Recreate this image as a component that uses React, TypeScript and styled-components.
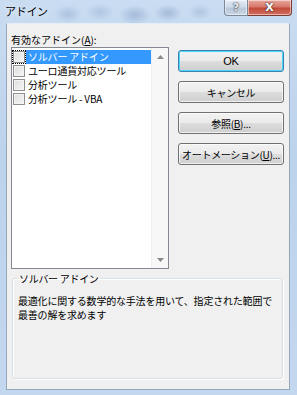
import React from 'react'
import styled, { createGlobalStyle } from 'styled-components'

const GlobalStyle = createGlobalStyle`
  html, body { margin: 0; padding: 0; }
  body {
    font-family: "Noto Sans CJK JP", "Noto Sans", sans-serif;
    font-size: 10px;
    color: #000;
  }
`

const Frame = styled.div`
  width: 297px;
  height: 395px;
  box-sizing: border-box;
  display: flex;
  flex-direction: column;
  background:
    radial-gradient(ellipse 14px 9px at 68px 14px, rgba(120,150,190,0.35), transparent),
    radial-gradient(ellipse 14px 9px at 100px 12px, rgba(120,150,190,0.3), transparent),
    radial-gradient(ellipse 16px 10px at 135px 15px, rgba(110,140,185,0.4), transparent),
    radial-gradient(ellipse 14px 9px at 168px 13px, rgba(110,140,185,0.4), transparent),
    radial-gradient(ellipse 12px 8px at 200px 12px, rgba(120,150,190,0.3), transparent),
    linear-gradient(180deg, #c9dcf1 0%, #bcd3ec 40%, #c3d8ef 100%);
`

const TitleBar = styled.div`
  height: 23px;
  display: flex;
  align-items: flex-start;
  justify-content: space-between;
  padding: 0 5px 0 5px;
`

const Title = styled.div`
  font-size: 11px;
  line-height: 14px;
  letter-spacing: -0.3px;
  margin-top: 4px;
  text-shadow: 0 0 6px rgba(255,255,255,0.9);
`

const Caption = styled.div`
  display: flex;
`

const CaptionButton = styled.div<{ $close?: boolean }>`
  width: ${({ $close }) => ($close ? '44px' : '24px')};
  height: 16px;
  box-sizing: border-box;
  display: flex;
  align-items: center;
  justify-content: center;
  border: 1px solid ${({ $close }) => ($close ? '#7d3a32' : '#7a8797')};
  border-top: none;
  border-left-width: ${({ $close }) => ($close ? '0' : '1px')};
  border-radius: ${({ $close }) => ($close ? '0 0 4px 0' : '0 0 0 4px')};
  background: ${({ $close }) =>
    $close
      ? 'linear-gradient(180deg, #e8a89e 0%, #d7786b 45%, #c24a3a 55%, #d0705f 100%)'
      : 'linear-gradient(180deg, #e4ecf5 0%, #cfdbe9 45%, #b9c8da 55%, #c9d6e5 100%)'};
  box-shadow: inset 0 0 0 1px rgba(255,255,255,0.5);
  color: ${({ $close }) => ($close ? '#fff' : '#e8eef5')};
  font-family: "DejaVu Sans", sans-serif;
  font-weight: bold;
  font-size: 11px;
  text-shadow: 0 0 1px #333, 0 0 2px #333;
`

const Client = styled.div`
  flex: 1;
  margin: 0 7px 5px 6px;
  border: 1px solid #97a6ba;
  border-top-color: #e6eef7;
  background: #f0f0f0;
  padding: 9px 5px 0 4px;
  display: flex;
  flex-direction: column;
`

const Label = styled.div`
  line-height: 13px;
  height: 13px;
  margin-bottom: 1px;
`

const Key = styled.span`
  text-decoration: underline;
`

const Upper = styled.div`
  display: flex;
  gap: 9px;
`

const ListBox = styled.div`
  width: 158px;
  height: 222px;
  box-sizing: border-box;
  border: 1px solid #828790;
  background: #fff;
  display: flex;
`

const Items = styled.div`
  flex: 1;
  padding: 2px 0 0 1px;
`

const Row = styled.div`
  height: 14px;
  display: flex;
  align-items: center;
`

const Check = styled.span<{ $focus?: boolean }>`
  width: 12px;
  height: 12px;
  box-sizing: border-box;
  border: 1px solid #8e8f8f;
  background: linear-gradient(135deg, #dcdcdc, #f7f7f7);
  box-shadow: inset 0 0 0 1px #f4f4f4;
  outline: ${({ $focus }) => ($focus ? '1px dotted #000' : 'none')};
  outline-offset: 0;
  flex-shrink: 0;
`

const ItemText = styled.span<{ $selected?: boolean }>`
  flex: 1;
  height: 14px;
  line-height: 14px;
  margin-left: 1px;
  padding-left: 2px;
  letter-spacing: -0.2px;
  white-space: nowrap;
  background: ${({ $selected }) => ($selected ? '#3399ff' : 'transparent')};
  color: ${({ $selected }) => ($selected ? '#fff' : '#000')};
`

const ScrollBar = styled.div`
  width: 16px;
  display: flex;
  flex-direction: column;
  justify-content: space-between;
  align-items: center;
  background: #f7f7f8;
  border-left: 1px solid #efefef;
  padding: 7px 0 6px;
`

const Arrow = styled.svg`
  width: 7px;
  height: 4px;
  display: block;
`

const Buttons = styled.div`
  width: 106px;
  padding-top: 3px;
  display: flex;
  flex-direction: column;
  gap: 9px;
`

const Button = styled.div<{ $default?: boolean }>`
  height: 22px;
  box-sizing: border-box;
  border: 1px solid ${({ $default }) => ($default ? '#3c7fb1' : '#707070')};
  border-radius: 3px;
  background: linear-gradient(180deg, #f2f2f2 0%, #ebebeb 49%, #dddddd 51%, #cfcfcf 100%);
  box-shadow: ${({ $default }) =>
    $default ? 'inset 0 0 0 1px #48d8fb' : 'inset 0 0 0 1px rgba(255,255,255,0.7)'};
  display: flex;
  align-items: center;
  justify-content: center;
  letter-spacing: -0.3px;
  font-family: ${({ $default }) =>
    $default ? '"Liberation Sans", sans-serif' : '"Noto Sans CJK JP", sans-serif'};
  font-size: ${({ $default }) => ($default ? '11px' : '10px')};
`

const Group = styled.fieldset`
  margin: 3px 1px 10px 1px;
  padding: 9px 5px 0 5px;
  flex: 1;
  border: 1px solid #d5dfe5;
  border-radius: 3px;
  box-shadow: inset 1px 1px 0 #fff, 1px 1px 0 #fff;
  min-width: 0;
`

const Legend = styled.legend`
  padding: 0 2px 0 1px;
  margin-left: 0;
  line-height: 13px;
  letter-spacing: -0.3px;
`

const Description = styled.div`
  line-height: 14px;
  letter-spacing: -0.2px;
`

const items = ['ソルバー アドイン', 'ユーロ通貨対応ツール', '分析ツール', '分析ツール - VBA']

function ScrollArrow({ up }: { up?: boolean }) {
  return (
    <Arrow viewBox="0 0 7 4">
      <path d={up ? 'M0 4 L3.5 0 L7 4 Z' : 'M0 0 L3.5 4 L7 0 Z'} fill="#8a8a8a" />
    </Arrow>
  )
}

export default function App() {
  return (
    <>
      <GlobalStyle />
      <Frame>
        <TitleBar>
          <Title>アドイン</Title>
          <Caption>
            <CaptionButton>?</CaptionButton>
            <CaptionButton $close>X</CaptionButton>
          </Caption>
        </TitleBar>
        <Client>
          <Label>
            有効なアドイン(<Key>A</Key>):
          </Label>
          <Upper>
            <ListBox>
              <Items>
                {items.map((item, index) => (
                  <Row key={item}>
                    <Check $focus={index === 0} />
                    <ItemText $selected={index === 0}>{item}</ItemText>
                  </Row>
                ))}
              </Items>
              <ScrollBar>
                <ScrollArrow up />
                <ScrollArrow />
              </ScrollBar>
            </ListBox>
            <Buttons>
              <Button $default>OK</Button>
              <Button>キャンセル</Button>
              <Button>
                参照(<Key>B</Key>)...
              </Button>
              <Button>
                オートメーション(<Key>U</Key>)...
              </Button>
            </Buttons>
          </Upper>
          <Group>
            <Legend>ソルバー アドイン</Legend>
            <Description>
              最適化に関する数学的な手法を用いて、指定された範囲で
              <br />
              最善の解を求めます
            </Description>
          </Group>
        </Client>
      </Frame>
    </>
  )
}
